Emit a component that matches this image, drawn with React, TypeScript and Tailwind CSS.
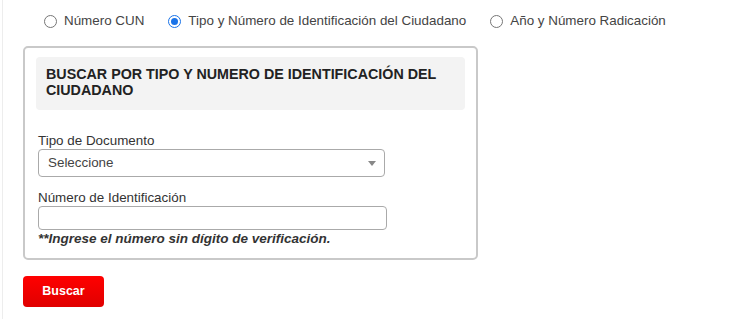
import React, { useState } from 'react';

const options = [
    { id: 'cun', label: 'Número CUN' },
    { id: 'doc', label: 'Tipo y Número de Identificación del Ciudadano' },
    { id: 'rad', label: 'Año y Número Radicación' },
];

const Radio: React.FC<{ checked: boolean }> = ({ checked }) => (
    <span
        className={`flex h-[13px] w-[13px] shrink-0 items-center justify-center rounded-full border ${checked ? 'border-[#1a73e8]' : 'border-[#767676]'} bg-white`}
    >
        {checked && <span className="h-[7px] w-[7px] rounded-full bg-[#1a73e8]" />}
    </span>
);

export default function App() {
    const [mode, setMode] = useState('doc');

    return (
        <div className="h-[319px] w-[750px] bg-white" style={{ fontFamily: '"Liberation Sans", Arial, sans-serif' }}>
            <div className="ml-[2px] h-full border-l border-[#ededed]">
                <div className="flex h-[30px] items-center pl-[41px] pt-[12px]">
                    {options.map((o, i) => (
                        <label
                            key={o.id}
                            onClick={() => setMode(o.id)}
                            className={`flex cursor-pointer items-center gap-[7px] text-[13.4px] text-[#444] ${i > 0 ? 'ml-[24px]' : ''}`}
                        >
                            <Radio checked={mode === o.id} />
                            <span>{o.label}</span>
                        </label>
                    ))}
                </div>

                <div className="ml-[20px] mt-[16px] h-[214px] w-[455px] rounded-[5px] border-2 border-[#c9c9c9] px-[11px] pt-[9px]">
                    <div className="h-[53px] rounded-[4px] bg-[#f3f3f3] px-[10px] pt-[9px] text-[14.3px] font-bold leading-[16px] text-[#222]">
                        BUSCAR POR TIPO Y NUMERO DE IDENTIFICACIÓN DEL
                        <br />
                        CIUDADANO
                    </div>

                    <div className="pl-[2px] pt-[23px] text-[13.4px] text-[#333]">
                        <div className="leading-[16px]">Tipo de Documento</div>
                        <div className="flex h-[28px] w-[347px] items-center justify-between rounded-[4px] border border-[#aaa] pl-[9px] pr-[8px]">
                            <span className="text-[#444]">Seleccione</span>
                            <svg width="8" height="5" viewBox="0 0 8 5">
                                <path d="M0 0h8L4 5z" fill="#888" />
                            </svg>
                        </div>

                        <div className="mt-[13px] leading-[16px]">Número de Identificación</div>
                        <input className="block h-[24px] w-[349px] rounded-[4px] border border-[#aaa] px-2 text-[13px] outline-none" />
                        <div className="mt-[1px] text-[13.5px] font-bold italic leading-[16px] text-[#333]">
                            **Ingrese el número sin dígito de verificación.
                        </div>
                    </div>
                </div>

                <button className="ml-[20px] mt-[16px] h-[31px] w-[81px] rounded-[4px] bg-gradient-to-b from-[#f00] to-[#e00000] text-[12.5px] font-bold text-white">
                    Buscar
                </button>
            </div>
        </div>
    );
}
